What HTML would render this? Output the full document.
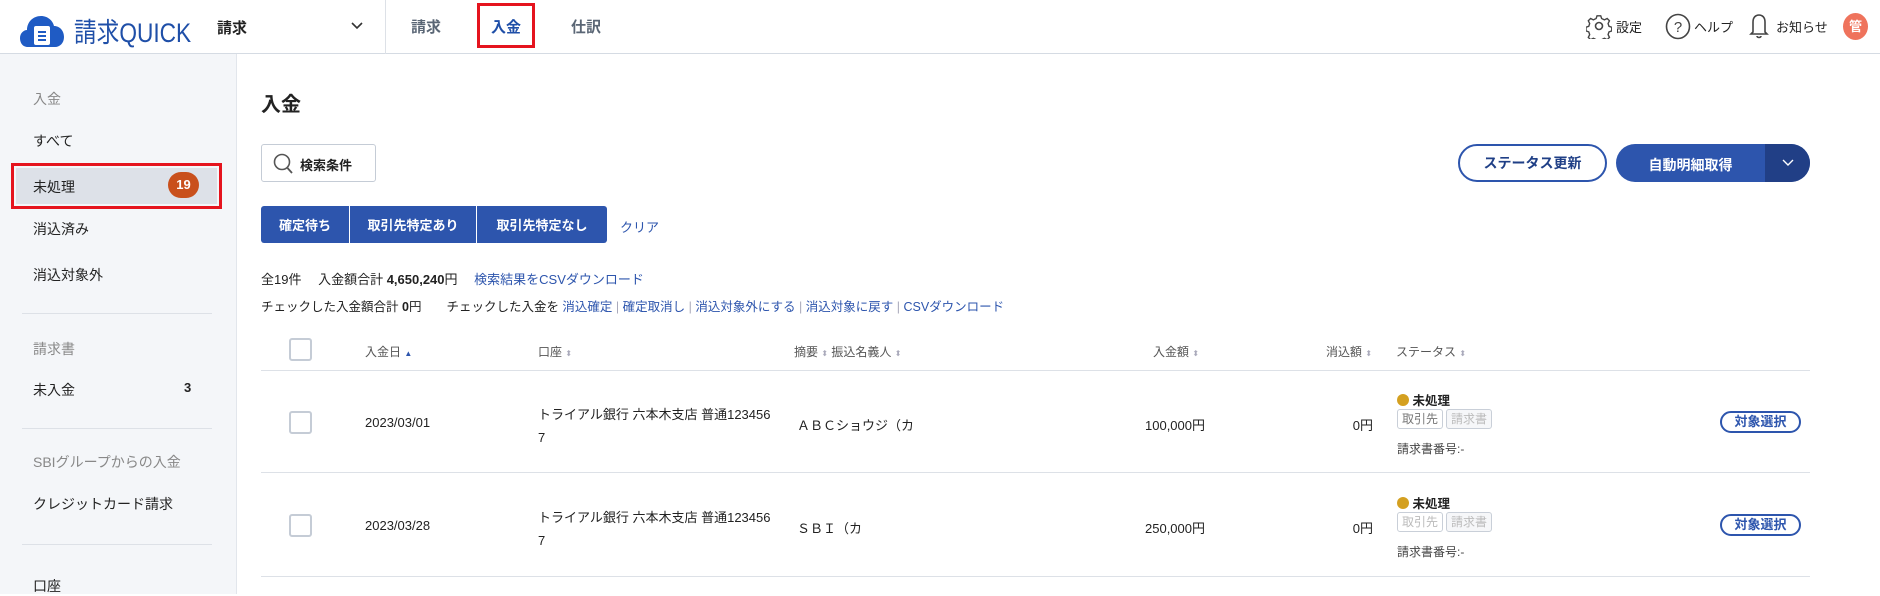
<!DOCTYPE html>
<html><head><meta charset="utf-8"><style>
*{box-sizing:border-box;margin:0;padding:0}
body{width:1880px;height:594px;overflow:hidden;background:#fff;font-family:"Liberation Sans","Noto Sans CJK JP",sans-serif;color:#222;position:relative;font-size:13px}
.a{position:absolute;white-space:nowrap}
.hdr{position:absolute;left:0;top:0;width:1880px;height:54px;border-bottom:1px solid #d5dbe3;background:#fff}
.side{position:absolute;left:0;top:54px;width:237px;height:540px;background:#f4f6f9;border-right:1px solid #e2e6ec}
.si{position:absolute;left:33px;font-size:14px;color:#222}
.sg{color:#888}
.div{position:absolute;left:22px;width:190px;height:1px;background:#dde1e7}
.blue{color:#2d55ad}
.btn{position:absolute;background:#2d55ad;color:#fff;font-weight:bold;font-size:13px;display:flex;align-items:center;justify-content:center}
.hl{position:absolute;left:261px;width:1549px;height:1px;background:#dde1e7}
.cb{position:absolute;left:289px;width:23px;height:23px;border:2px solid #c5ccd6;border-radius:3px;background:#fff}
.th{color:#555;font-size:12px}
.sort{color:#aab;font-size:8px}
.tag{display:inline-block;border:1px solid #c9cfd8;border-radius:3px;font-size:12px;padding:0 4px;height:20px;line-height:18px;color:#777;margin-right:3px}
.sel{position:absolute;left:1720px;width:81px;height:22px;border:2px solid #2d55ad;border-radius:11px;color:#2d55ad;font-weight:bold;font-size:13px;text-align:center;line-height:18px}
</style></head><body>
<div class="hdr"></div>
<svg class="a" style="left:20px;top:12px" width="44" height="36" viewBox="0 0 44 36"><path d="M8 35 C2 35 0 30 0 26 C0 21 4 18 7 18 C7 10 13 4 21 4 C28 4 33 9 34 14 C40 14 44 19 44 25 C44 31 40 35 35 35 Z" fill="#1f5bc4"/><rect x="14" y="14" width="16" height="19" rx="2" fill="#fff"/><rect x="18" y="19" width="8" height="2" fill="#1f5bc4"/><rect x="18" y="23" width="8" height="2" fill="#1f5bc4"/><rect x="18" y="27" width="8" height="2" fill="#1f5bc4"/></svg>
<div class="a" style="left:74px;top:11px;font-size:27px;color:#1f4fa8;transform:scaleX(0.84);transform-origin:left top">請求QUICK</div>
<div class="a" style="left:217px;top:17px;font-size:15px;font-weight:bold">請求</div>
<svg class="a" style="left:350px;top:21px" width="14" height="10"><path d="M2 2 L7 7 L12 2" stroke="#333" stroke-width="1.6" fill="none"/></svg>
<div class="a" style="left:385px;top:0;width:1px;height:54px;background:#dde1e7"></div>
<div class="a" style="left:411px;top:16px;font-size:15px;font-weight:bold;color:#5a6675">請求</div>
<div class="a" style="left:477px;top:3px;width:58px;height:45px;border:3px solid #e5141e"></div>
<div class="a" style="left:491px;top:16px;font-size:15px;font-weight:bold;color:#1f4fa8">入金</div>
<div class="a" style="left:571px;top:16px;font-size:15px;font-weight:bold;color:#5a6675">仕訳</div>
<svg class="a" style="left:1586px;top:13px" width="26" height="26" viewBox="0 0 26 26"><circle cx="13" cy="13" r="3.5" fill="none" stroke="#444" stroke-width="1.6"/><path d="M11 2h4l1 3 3 1.5 3-1.5 2.5 2.5-1.5 3 1 3 3 1v4l-3 1-1 3 1.5 3-2.5 2.5-3-1.5-3 1.5-1 3h-4l-1-3-3-1.5-3 1.5-2.5-2.5 1.5-3-1-3-3-1v-4l3-1 1-3-1.5-3 2.5-2.5 3 1.5 3-1.5z" transform="scale(0.92) translate(1 1)" fill="none" stroke="#444" stroke-width="1.5"/></svg>
<div class="a" style="left:1616px;top:17px;font-size:13px">設定</div>
<svg class="a" style="left:1665px;top:13px" width="26" height="27"><ellipse cx="13" cy="13.5" rx="11.5" ry="12" fill="none" stroke="#444" stroke-width="1.6"/><text x="13" y="19" text-anchor="middle" font-size="15" font-family="Liberation Sans" fill="#444">?</text></svg>
<div class="a" style="left:1694px;top:17px;font-size:13px">ヘルプ</div>
<svg class="a" style="left:1749px;top:12px" width="20" height="28"><path d="M4 20 V10 C4 5 7 3 10 3 C13 3 16 5 16 10 V20 L18 22 H2 Z M8 24 C8 26 12 26 12 24" fill="none" stroke="#444" stroke-width="1.6"/></svg>
<div class="a" style="left:1776px;top:17px;font-size:13px">お知らせ</div>
<div class="a" style="left:1843px;top:13px;width:25px;height:27px;border-radius:50%;background:#ef735c;color:#fff;font-size:13px;font-weight:bold;text-align:center;line-height:27px">管</div>

<div class="side"></div>
<div class="si sg" style="top:89px">入金</div>
<div class="si" style="top:131px">すべて</div>
<div class="a" style="left:11px;top:163px;width:211px;height:46px;border:3px solid #e5141e"></div>
<div class="a" style="left:16px;top:168px;width:201px;height:36px;background:#dde1e8"></div>
<div class="si" style="top:177px">未処理</div>
<div class="a" style="left:168px;top:172px;width:31px;height:26px;border-radius:13px;background:#c9501c;color:#fff;font-weight:bold;font-size:13px;text-align:center;line-height:26px">19</div>
<div class="si" style="top:219px">消込済み</div>
<div class="si" style="top:265px">消込対象外</div>
<div class="div" style="top:313px"></div>
<div class="si sg" style="top:339px">請求書</div>
<div class="si" style="top:380px">未入金</div>
<div class="a" style="left:184px;top:380px;font-size:13px;font-weight:bold">3</div>
<div class="div" style="top:428px"></div>
<div class="si sg" style="top:452px">SBIグループからの入金</div>
<div class="si" style="top:494px">クレジットカード請求</div>
<div class="div" style="top:544px"></div>
<div class="si" style="top:576px">口座</div>

<div class="a" style="left:261px;top:88px;font-size:20px;font-weight:bold">入金</div>
<div class="a" style="left:261px;top:144px;width:115px;height:38px;border:1px solid #c5ccd6;border-radius:3px;background:#fff"></div>
<svg class="a" style="left:273px;top:152px" width="22" height="24"><circle cx="9" cy="10" r="7.5" fill="none" stroke="#555" stroke-width="1.6"/><path d="M14.5 16 L19 21" stroke="#555" stroke-width="1.8"/></svg>
<div class="a" style="left:300px;top:155px;font-size:13px;font-weight:bold">検索条件</div>
<div class="btn" style="left:261px;top:206px;width:88px;height:37px;border-radius:3px 0 0 3px">確定待ち</div>
<div class="btn" style="left:350px;top:206px;width:126px;height:37px">取引先特定あり</div>
<div class="btn" style="left:477px;top:206px;width:130px;height:37px;border-radius:0 3px 3px 0">取引先特定なし</div>
<div class="a blue" style="left:620px;top:217px;font-size:13px">クリア</div>
<div class="a" style="left:1458px;top:144px;width:149px;height:38px;border:2px solid #2d55ad;border-radius:19px;color:#1f3f86;font-weight:bold;font-size:14px;text-align:center;line-height:34px">ステータス更新</div>
<div class="a" style="left:1616px;top:144px;width:194px;height:38px;border-radius:19px;background:#2d55ad;overflow:hidden"><div class="a" style="left:149px;top:0;width:45px;height:38px;background:#213f86"></div></div>
<div class="a" style="left:1616px;top:155px;width:149px;text-align:center;color:#fff;font-weight:bold;font-size:14px">自動明細取得</div>
<svg class="a" style="left:1781px;top:158px" width="14" height="10"><path d="M2 2 L7 7 L12 2" stroke="#fff" stroke-width="1.4" fill="none"/></svg>

<div class="a" style="left:261px;top:269px;font-size:13px">全19件　 入金額合計 <b>4,650,240</b>円　 <span class="blue">検索結果をCSVダウンロード</span></div>
<div class="a" style="left:261px;top:296px;font-size:12.5px">チェックした入金額合計 <b>0</b>円　　チェックした入金を <span class="blue">消込確定</span> <span style="color:#aab">|</span> <span class="blue">確定取消し</span> <span style="color:#aab">|</span> <span class="blue">消込対象外にする</span> <span style="color:#aab">|</span> <span class="blue">消込対象に戻す</span> <span style="color:#aab">|</span> <span class="blue">CSVダウンロード</span></div>

<div class="cb" style="top:338px"></div>
<div class="a th" style="left:365px;top:343px">入金日 <span style="color:#2d55ad;font-size:8px">▲</span></div>
<div class="a th" style="left:538px;top:343px">口座 <span class="sort">⬍</span></div>
<div class="a th" style="left:794px;top:343px">摘要 <span class="sort">⬍</span> 振込名義人 <span class="sort">⬍</span></div>
<div class="a th" style="left:1153px;top:343px">入金額 <span class="sort">⬍</span></div>
<div class="a th" style="left:1326px;top:343px">消込額 <span class="sort">⬍</span></div>
<div class="a th" style="left:1396px;top:343px">ステータス <span class="sort">⬍</span></div>
<div class="hl" style="top:370px"></div>

<div class="cb" style="top:411px"></div>
<div class="a" style="left:365px;top:415px">2023/03/01</div>
<div class="a" style="left:538px;top:403px;line-height:23px">トライアル銀行 六本木支店 普通123456<br>7</div>
<div class="a" style="left:797px;top:415px">ＡＢＣショウジ（カ</div>
<div class="a" style="left:1205px;top:415px;transform:translateX(-100%)">100,000円</div>
<div class="a" style="left:1373px;top:415px;transform:translateX(-100%)">0円</div>
<div class="a" style="left:1397px;top:390px;font-weight:bold;font-size:12.5px"><span style="display:inline-block;width:12px;height:12px;border-radius:50%;background:#d4a020;vertical-align:-1px"></span> 未処理</div>
<div class="a" style="left:1397px;top:409px"><span class="tag">取引先</span><span class="tag" style="color:#bbb;background:#f6f7f9">請求書</span></div>
<div class="a" style="left:1397px;top:440px;font-size:12px;color:#444">請求書番号:-</div>
<div class="sel" style="top:411px">対象選択</div>
<div class="hl" style="top:472px"></div>

<div class="cb" style="top:514px"></div>
<div class="a" style="left:365px;top:518px">2023/03/28</div>
<div class="a" style="left:538px;top:506px;line-height:23px">トライアル銀行 六本木支店 普通123456<br>7</div>
<div class="a" style="left:797px;top:518px">ＳＢＩ（カ</div>
<div class="a" style="left:1205px;top:518px;transform:translateX(-100%)">250,000円</div>
<div class="a" style="left:1373px;top:518px;transform:translateX(-100%)">0円</div>
<div class="a" style="left:1397px;top:493px;font-weight:bold;font-size:12.5px"><span style="display:inline-block;width:12px;height:12px;border-radius:50%;background:#d4a020;vertical-align:-1px"></span> 未処理</div>
<div class="a" style="left:1397px;top:512px"><span class="tag" style="color:#bbb">取引先</span><span class="tag" style="color:#bbb;background:#f6f7f9">請求書</span></div>
<div class="a" style="left:1397px;top:543px;font-size:12px;color:#444">請求書番号:-</div>
<div class="sel" style="top:514px">対象選択</div>
<div class="hl" style="top:576px"></div>
</body></html>
